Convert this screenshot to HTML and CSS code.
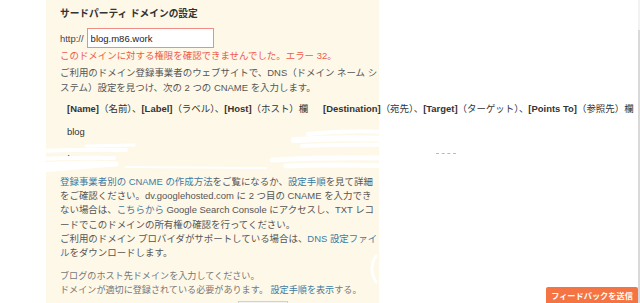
FILE: index.html
```html
<!DOCTYPE html>
<html lang="ja">
<head>
    <meta charset="UTF-8">
    <title>サードパーティ ドメインの設定</title>
    <link rel="stylesheet" href="styles.css">
</head>
<body>
    <div class="page">
        <div class="gutter"></div>
        <main class="panel">
            <h2 class="title">サードパーティ ドメインの設定</h2>
            <div class="domain-row">
                <span class="prefix">http://</span>
                <input class="domain-input" type="text" value="blog.m86.work">
            </div>
            <p class="error">このドメインに対する権限を確認できませんでした。エラー 32。</p>
            <p class="intro">ご利用のドメイン登録事業者のウェブサイトで、DNS（ドメイン ネーム システム）設定を見つけ、次の 2 つの CNAME を入力します。</p>

            <div class="cname">
                <div class="cname-row">
                    <div><b>[Name]</b>（名前）、<b>[Label]</b>（ラベル）、<b>[Host]</b>（ホスト）欄</div>
                    <div><b>[Destination]</b>（宛先）、<b>[Target]</b>（ターゲット）、<b>[Points To]</b>（参照先）欄</div>
                </div>
                <div class="cname-row">
                    <div>blog</div>
                    <div class="masked">ghs.google.com</div>
                </div>
                <div class="cname-row">
                    <div>·</div>
                    <div class="hidden-value"><span class="dash"></span></div>
                </div>
            </div>

            <div class="notes">
                <p><a href="#">登録事業者別の CNAME の作成方法</a>をご覧になるか、<a href="#">設定手順</a>を見て詳細をご確認ください。dv.googlehosted.com に 2 つ目の CNAME を入力できない場合は、<a href="#">こちらから</a> Google Search Console にアクセスし、TXT レコードでこのドメインの所有権の確認を行ってください。</p>
                <p>ご利用のドメイン プロバイダがサポートしている場合は、<a href="#">DNS 設定ファイル</a>をダウンロードします。</p>
            </div>

            <p class="help">ブログのホスト先ドメインを入力してください。<br>ドメインが適切に登録されている必要があります。 <a href="#">設定手順を表示</a>する。</p>
            <div class="actions">
                <button class="save" type="button" aria-label="保存"></button>
            </div>

            <!-- white marker strokes hiding the second record -->
            <svg class="redact" width="334" height="303" viewBox="0 0 334 303">
                <g fill="none" stroke="#fff" stroke-linecap="round" stroke-linejoin="round">
                    <path d="M40 146 L88 145" stroke-width="3"/>
                    <path d="M-4 151 Q40 149 80 150" stroke-width="4"/>
                    <path d="M-4 159 Q30 157 68 158" stroke-width="4"/>
                    <path d="M-4 165 Q40 162 70 164 Q30 167 -4 170" stroke-width="5"/>
                    <path d="M80 167 L220 168" stroke-width="2"/>
                    <path d="M262 134 Q300 130 340 132" stroke-width="4"/>
                    <path d="M248 140 Q295 137 340 139" stroke-width="6"/>
                    <path d="M256 146 Q300 144 340 145" stroke-width="4"/>
                    <path d="M226 160 Q280 157 340 158" stroke-width="5"/>
                    <path d="M240 166 Q290 164 340 166" stroke-width="5"/>
                    <path d="M330 256 Q322 268 330 282" stroke-width="3"/>
                </g>
            </svg>
        </main>
        <div class="rest"></div>
        <div class="scrollbar"></div>
    </div>
    <a class="feedback" href="#">フィードバックを送信</a>
</body>
</html>
```

FILE: styles.css
```css
body {
    margin: 0;
    font-family: "Liberation Sans", "Noto Sans CJK JP", sans-serif;
    font-size: 9.45px;
    color: #555;
    background: #fff;
    overflow: hidden;
}

.page {
    display: flex;
    height: 303px;
    overflow: hidden;
}

.gutter {
    width: 46px;
    flex: none;
}

.panel {
    position: relative;
    width: 319px;
    flex: none;
    padding: 7px 0 0 14px;
    background: #fef8e8;
}

.rest {
    flex: 1;
}

.scrollbar {
    width: 2px;
    flex: none;
    background: linear-gradient(#f2f2f2 0 30px, #d9d9d9 30px);
}

.title {
    margin: 0;
    font-size: 9.7px;
    line-height: 14px;
    font-weight: bold;
    color: #333;
}

.domain-row {
    display: flex;
    align-items: center;
    gap: 3px;
    margin-top: 7px;
}

.prefix {
    color: #444;
}

.domain-input {
    width: 127px;
    height: 20px;
    box-sizing: border-box;
    margin: 0;
    padding: 0 3px;
    border: 1px solid #f08d85;
    border-radius: 0;
    background: #fff;
    font-family: inherit;
    font-size: 9.5px;
    color: #222;
    outline: none;
}

.error {
    margin: 1px 0 0;
    line-height: 14px;
    color: #ef5b48;
}

.intro {
    margin: 2px 0 0;
    width: 318px;
    line-height: 15.4px;
}

.cname {
    margin-top: 6px;
    padding-left: 7px;
    color: #333;
}

.cname-row {
    display: grid;
    grid-template-columns: 256px 310px;
    line-height: 14px;
    white-space: nowrap;
    margin-bottom: 9px;
}

.cname-row b {
    font-weight: bold;
}

.masked {
    visibility: hidden;
}

.hidden-value {
    padding: 5px 0 0 113px;
}

.dash {
    display: block;
    width: 20px;
    height: 1px;
    border-top: 1px dashed #bbb;
}

.notes {
    margin-top: 13px;
    width: 318px;
    line-height: 14.3px;
}

.notes p {
    margin: 0;
}

a {
    color: #3b7ba3;
    text-decoration: none;
}

.help {
    margin: 8px 0 0;
    font-size: 9.1px;
    line-height: 14px;
    color: #777;
}

.actions {
    padding: 4px 0 0 178px;
}

.save {
    width: 50px;
    height: 18px;
    border: 1px solid #d0d0d0;
    background: #f4f4f4;
}

.redact {
    position: absolute;
    top: 0;
    left: 0;
}

.feedback {
    position: fixed;
    right: 2px;
    bottom: 0;
    width: 92px;
    height: 16px;
    box-sizing: border-box;
    padding-top: 3px;
    border-radius: 2px 2px 0 0;
    background: #f47444;
    color: #fff;
    font-size: 8.2px;
    font-weight: bold;
    line-height: 13px;
    text-align: center;
}
```
